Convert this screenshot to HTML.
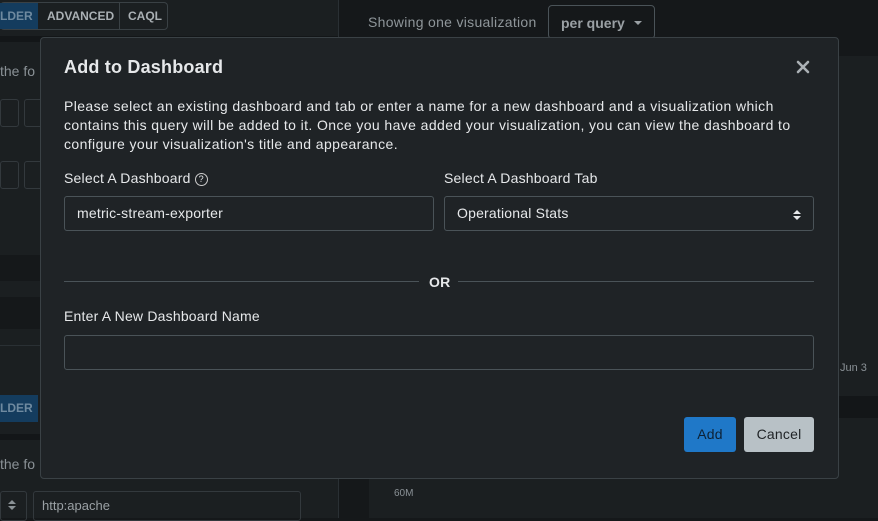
<!DOCTYPE html>
<html><head><style>
*{box-sizing:border-box;margin:0;padding:0}
body{width:878px;height:518px;overflow:hidden;background:#15181a;font-family:"Liberation Sans",sans-serif;position:relative;color:#8a9196}
.a{position:absolute}
.m{position:absolute;left:40px;top:37px;width:799px;height:442px;background:#1f2326;border:1px solid #3a4145;border-radius:4px;color:#e6e8ea;letter-spacing:0.2px}
.in{position:absolute;height:35px;border:1px solid #4a5358;border-radius:3px;background:#1f2326;font-size:14px;padding-left:12px;line-height:33px;color:#e6e8ea}
</style></head><body>
<div class="a" style="left:0;top:0;width:338px;height:518px;background:#1b1f21"></div>
<div class="a" style="left:0;top:2px;width:168px;height:28px;border:1px solid #3a4145;border-radius:4px;background:#1b1f21"></div>
<div class="a" style="left:0;top:3px;width:38px;height:26px;background:#143c5e;color:#6f8aa0;font-size:12px;font-weight:bold;line-height:26px">LDER</div>
<div class="a" style="left:47px;top:9px;font-size:12px;font-weight:bold;color:#aab0b4">ADVANCED</div>
<div class="a" style="left:119px;top:3px;width:1px;height:26px;background:#3a4145"></div>
<div class="a" style="left:128px;top:9px;font-size:12px;font-weight:bold;color:#aab0b4">CAQL</div>
<div class="a" style="left:0;top:36px;width:338px;height:6px;background:#131618"></div>
<div class="a" style="left:0;top:63px;font-size:14px">the fo</div>
<div class="a" style="left:0;top:99px;width:19px;height:28px;border:1px solid #33393d;border-radius:3px"></div>
<div class="a" style="left:24px;top:99px;width:30px;height:28px;border:1px solid #33393d;border-radius:3px"></div>
<div class="a" style="left:0;top:161px;width:19px;height:28px;border:1px solid #33393d;border-radius:3px"></div>
<div class="a" style="left:24px;top:161px;width:30px;height:28px;border:1px solid #33393d;border-radius:3px"></div>
<div class="a" style="left:0;top:255px;width:338px;height:26px;background:#15181a"></div>
<div class="a" style="left:0;top:297px;width:338px;height:32px;background:#15181a"></div>
<div class="a" style="left:0;top:345px;width:338px;height:1px;background:#2a3034"></div>
<div class="a" style="left:0;top:395px;width:38px;height:27px;background:#143c5e;color:#6f8aa0;font-size:12px;font-weight:bold;line-height:27px">LDER</div>
<div class="a" style="left:0;top:434px;width:338px;height:6px;background:#131618"></div>
<div class="a" style="left:0;top:456px;font-size:14px">the fo</div>
<div class="a" style="left:0;top:491px;width:27px;height:30px;border:1px solid #33393d;border-radius:3px"></div>
<div class="a" style="left:8px;top:500px;width:0;height:0;border-left:4px solid transparent;border-right:4px solid transparent;border-bottom:4px solid #8a9196"></div>
<div class="a" style="left:8px;top:506px;width:0;height:0;border-left:4px solid transparent;border-right:4px solid transparent;border-top:4px solid #8a9196"></div>
<div class="a" style="left:33px;top:491px;width:268px;height:30px;border:1px solid #33393d;border-radius:3px;color:#9aa0a4;font-size:13px;padding-left:8px;line-height:28px">http:apache</div>
<div class="a" style="left:338px;top:0;width:1px;height:518px;background:#2a3034"></div>
<div class="a" style="left:368px;top:14px;font-size:14px;color:#8f969a;letter-spacing:0.3px">Showing one visualization</div>
<div class="a" style="left:548px;top:5px;width:107px;height:34px;border:1px solid #4a5358;border-radius:4px;color:#9aa0a4;font-size:14px;font-weight:bold;padding-left:12px;line-height:34px">per query</div>
<div class="a" style="left:634px;top:21px;width:0;height:0;border-left:4px solid transparent;border-right:4px solid transparent;border-top:4px solid #9aa0a4"></div>
<div class="a" style="left:339px;top:56px;width:539px;height:340px;background:#1b1f21"></div>
<div class="a" style="left:339px;top:396px;width:539px;height:22px;background:#131618"></div>
<div class="a" style="left:840px;top:362px;font-size:11px;color:#8a9196">Jun 3</div>
<div class="a" style="left:369px;top:418px;width:509px;height:100px;background:#1b1f21"></div>
<div class="a" style="left:394px;top:488px;font-size:10px;color:#8a9196">60M</div>
<div class="m">
<div class="a" style="left:23px;top:19px;font-size:18px;font-weight:bold">Add to Dashboard</div>
<svg class="a" style="left:755px;top:22px" width="14" height="14" viewBox="0 0 14 14"><path d="M2 2L12 12M12 2L2 12" stroke="#aab0b4" stroke-width="2.6" stroke-linecap="round"/></svg>
<div class="a" style="left:23px;top:59px;width:740px;font-size:14px;line-height:19px;letter-spacing:0.4px">Please select an existing dashboard and tab or enter a name for a new dashboard and a visualization which contains this query will be added to it. Once you have added your visualization, you can view the dashboard to configure your visualization's title and appearance.</div>
<div class="a" style="left:23px;top:132px;font-size:14px">Select A Dashboard <span style="display:inline-block;width:13px;height:13px;border:1px solid #ccc;border-radius:50%;font-size:9px;text-align:center;line-height:11px;vertical-align:1px;letter-spacing:0">?</span></div>
<div class="a" style="left:403px;top:132px;font-size:14px">Select A Dashboard Tab</div>
<div class="in" style="left:23px;top:158px;width:370px">metric-stream-exporter</div>
<div class="in" style="left:403px;top:158px;width:370px">Operational Stats</div>
<div class="a" style="left:752px;top:172px;width:0;height:0;border-left:4px solid transparent;border-right:4px solid transparent;border-bottom:4px solid #e6e8ea"></div>
<div class="a" style="left:752px;top:178px;width:0;height:0;border-left:4px solid transparent;border-right:4px solid transparent;border-top:4px solid #e6e8ea"></div>
<div class="a" style="left:23px;top:243px;width:355px;height:1px;background:#4a5358"></div>
<div class="a" style="left:388px;top:236px;font-size:14px;font-weight:bold">OR</div>
<div class="a" style="left:417px;top:243px;width:356px;height:1px;background:#4a5358"></div>
<div class="a" style="left:23px;top:270px;font-size:14px">Enter A New Dashboard Name</div>
<div class="in" style="left:23px;top:297px;width:750px"></div>
<div class="a" style="left:643px;top:379px;width:52px;height:35px;background:#1f78c8;border-radius:3px;font-size:14px;text-align:center;line-height:35px;color:#0d2236">Add</div>
<div class="a" style="left:703px;top:379px;width:70px;height:35px;background:#b8c1c6;border-radius:3px;font-size:14px;text-align:center;line-height:35px;color:#1f2326">Cancel</div>
</div>
</body></html>
